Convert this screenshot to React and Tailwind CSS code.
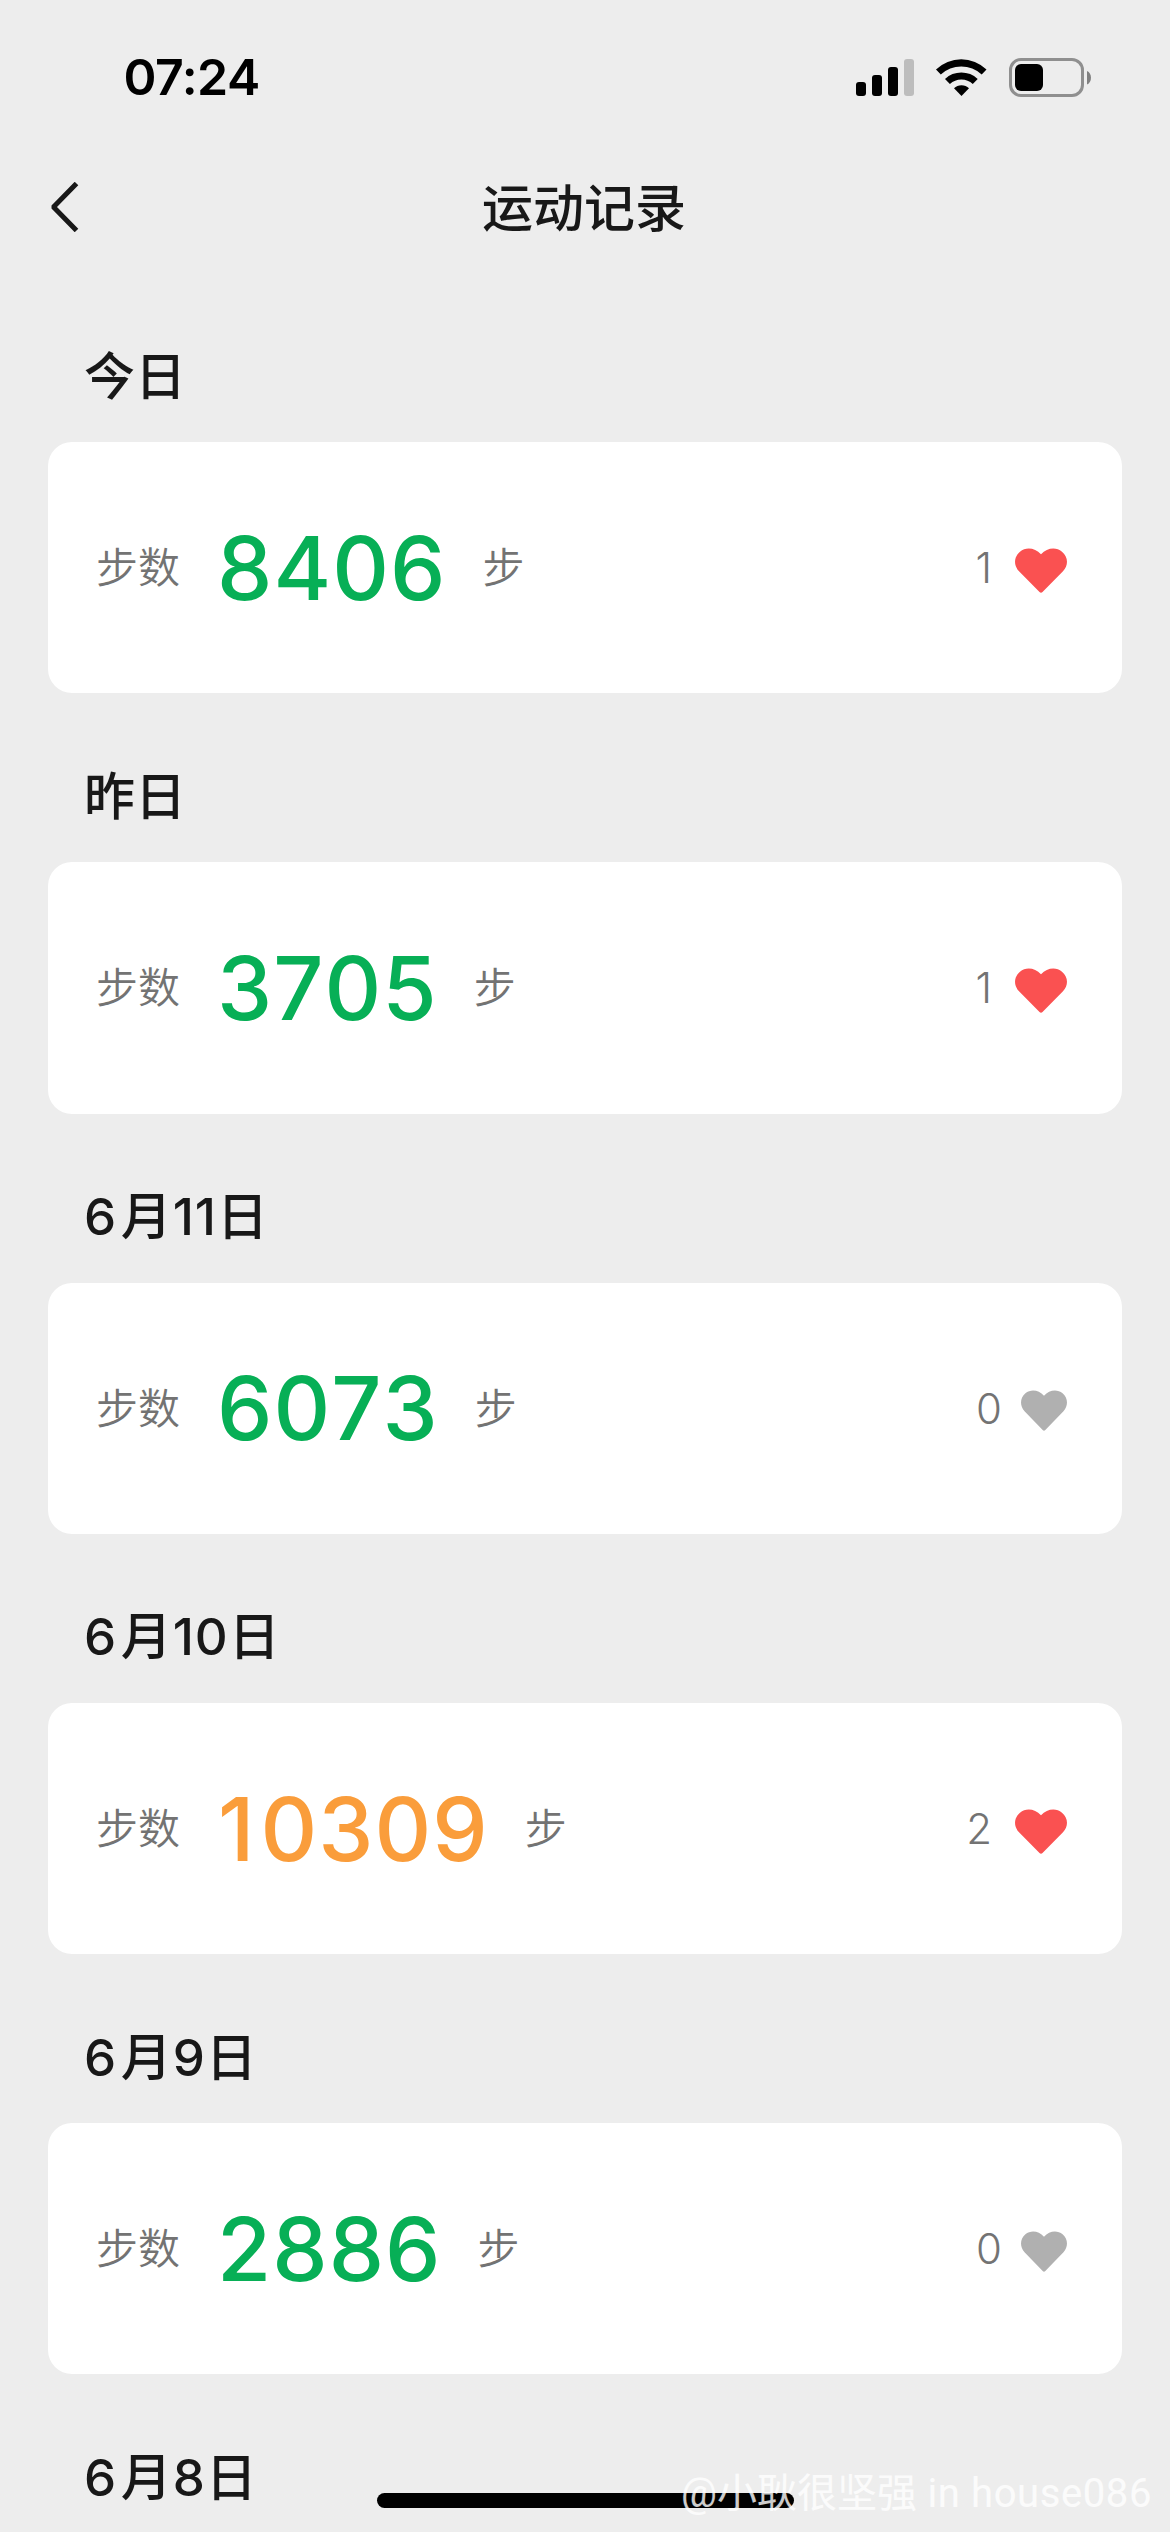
const records = [
  { day: "今日", steps: "8406", likes: 1, color: "text-[#07af56]" },
  { day: "昨日", steps: "3705", likes: 1, color: "text-[#07af56]" },
  { day: "6月11日", steps: "6073", likes: 0, color: "text-[#07af56]" },
  { day: "6月10日", steps: "10309", likes: 2, color: "text-[#fa9d3b]" },
  { day: "6月9日", steps: "2886", likes: 0, color: "text-[#07af56]" },
];

function StatusBar() {
  return (
    <div className="flex h-[150px] items-start justify-between pt-[57px] pl-[123.500px] pr-[78px] text-black">
      <div className="h-10 text-[50px] leading-[40px] font-semibold tracking-[-0.5px]">07:24</div>
      <svg className="mt-px h-10 w-[240px]" viewBox="852 58 240 40" fill="none">
        <rect x="856" y="82" width="10" height="14" rx="3" fill="#000" />
        <rect x="872" y="75" width="10" height="21" rx="3" fill="#000" />
        <rect x="888" y="67" width="10" height="29" rx="3" fill="#000" />
        <rect x="904" y="59" width="10" height="37" rx="3" fill="#bdbdbd" />
        <path d="M936 69.500a36.500 36.500 0 0 1 50.500 0l-4.800 5a29.800 29.800 0 0 0-40.900 0z" fill="#000" />
        <path d="M945 79a23.500 23.500 0 0 1 32.700 0l-4.900 5a16.500 16.500 0 0 0-22.900 0z" fill="#000" />
        <path d="M954 88.300a10.500 10.500 0 0 1 15 0l-7.500 7.700z" fill="#000" />
        <rect x="1010.500" y="59.500" width="72" height="36" rx="10.500" stroke="#8f8f8f" strokeWidth="3" />
        <rect x="1015" y="64" width="28" height="27" rx="6" fill="#000" />
        <path d="M1087 71c5.300 2 5.300 11.500 0 13.500z" fill="#808080" />
      </svg>
    </div>
  );
}

function NavBar() {
  return (
    <div className="grid h-[123px] grid-cols-[1fr_auto_1fr] items-start pr-[50px] pl-12">
      <svg className="mt-8 h-[50px] w-8" viewBox="0 0 32 50" fill="none">
        <path d="M28.500 1.500 6 24.400v1.200l22.500 22.900" stroke="#181818" strokeWidth="5" />
      </svg>
      <h1 className="mt-[28.500px] text-[51px] leading-[60px] font-medium">运动记录</h1>
    </div>
  );
}

function Heart({ active }) {
  return (
    <svg
      className={active ? "mt-[5px] ml-[23px] h-[45px] w-[52px] text-[#fa5151]" : "mt-[5px] ml-[19px] h-[41px] w-[46px] text-[#b0b0b0]"}
      viewBox="0 0 52 45"
      preserveAspectRatio="none"
      fill="currentColor"
    >
      <path d="M26 6.300C32-.2 41-1.200 47 3.700c6.300 5.300 6.600 13.500 1 19.600L27.500 43.900a2.100 2.100 0 0 1-3 0L4 23.300C-1.600 17.200-1.300 9 5 3.700 11-1.200 20-.2 26 6.300z" />
    </svg>
  );
}

function DayHeading({ day }) {
  const [month, date] = day.split("月");
  return (
    <h2 className="h-[169px] pt-[73.500px] pl-9 text-[51px] leading-[60px] font-medium">
      {date ? (
        <span className="tracking-[1px]">
          {month}
          <span className="ml-[3.500px]">月</span>
          {date}
        </span>
      ) : (
        day
      )}
    </h2>
  );
}

function Steps({ value, color }) {
  return (
    <span className={`ml-[37px] text-[88px] font-medium tracking-[1px] [font-kerning:none] ${color}`}>
      {value.split("").map((digit, i) => (
        <span key={i} className={digit === "1" ? "ml-px mr-[5px]" : ""}>
          {digit}
        </span>
      ))}
    </span>
  );
}

function Record({ record }) {
  return (
    <section>
      <DayHeading day={record.day} />
      <div className="flex h-[251.300px] items-center rounded-3xl bg-white pl-12 pr-[55px] text-[42px] text-[#737373]">
        <span className="font-[350]">步数</span>
        <Steps value={record.steps} color={record.color} />
        <span className="ml-9 font-[350]">步</span>
        <span className="ml-auto font-light">{record.likes}</span>
        <Heart active={record.likes > 0} />
      </div>
    </section>
  );
}

export default function App() {
  return (
    <div className="relative h-[2532px] w-[1170px] overflow-hidden bg-[#ededed] font-['Inter','Noto_Sans_CJK_SC',sans-serif] text-[#181818]">
      <StatusBar />
      <NavBar />
      <main className="px-12">
        {records.map((record) => (
          <Record key={record.day} record={record} />
        ))}
        <DayHeading day="6月8日" />
      </main>
      <div className="absolute bottom-6 left-[377px] h-[15px] w-[417px] rounded-full bg-black" />
      <div className="absolute right-[18px] bottom-[10px] font-['Roboto','Noto_Sans_CJK_SC',sans-serif] text-[40px] leading-[56px] whitespace-nowrap text-white/80">
        @小耿很坚强<span className="tracking-[0.6px]"> in house086</span>
      </div>
    </div>
  );
}
